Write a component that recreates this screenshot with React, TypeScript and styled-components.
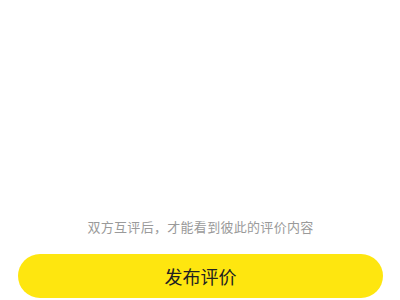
import React from "react";
import styled, { createGlobalStyle } from "styled-components";

const GlobalStyle = createGlobalStyle`
  html, body {
    margin: 0;
    padding: 0;
    background: #ffffff;
  }
  body {
    font-family: "Noto Sans CJK SC", "Noto Sans", sans-serif;
  }
`;

const Page = styled.div`
  width: 400px;
  height: 300px;
  display: flex;
  flex-direction: column;
  justify-content: flex-end;
  align-items: center;
  padding: 0 17px 2px 18px;
  box-sizing: border-box;
  background: #fff;
`;

const Hint = styled.p`
  margin: 0 0 18px;
  font-size: 13px;
  line-height: 18px;
  letter-spacing: 0.3px;
  color: #9a9a9a;
  text-align: center;
`;

const SubmitButton = styled.button`
  width: 100%;
  height: 44px;
  border: none;
  border-radius: 22px;
  background-color: #fee60f;
  color: #222;
  font-family: "Noto Sans CJK SC", "Noto Sans", sans-serif;
  font-size: 18px;
  display: flex;
  align-items: center;
  justify-content: center;
  cursor: pointer;
`;

const App = () => {
  return (
    <>
      <GlobalStyle />
      <Page>
        <Hint>双方互评后，才能看到彼此的评价内容</Hint>
        <SubmitButton>发布评价</SubmitButton>
      </Page>
    </>
  );
};

export default App;
